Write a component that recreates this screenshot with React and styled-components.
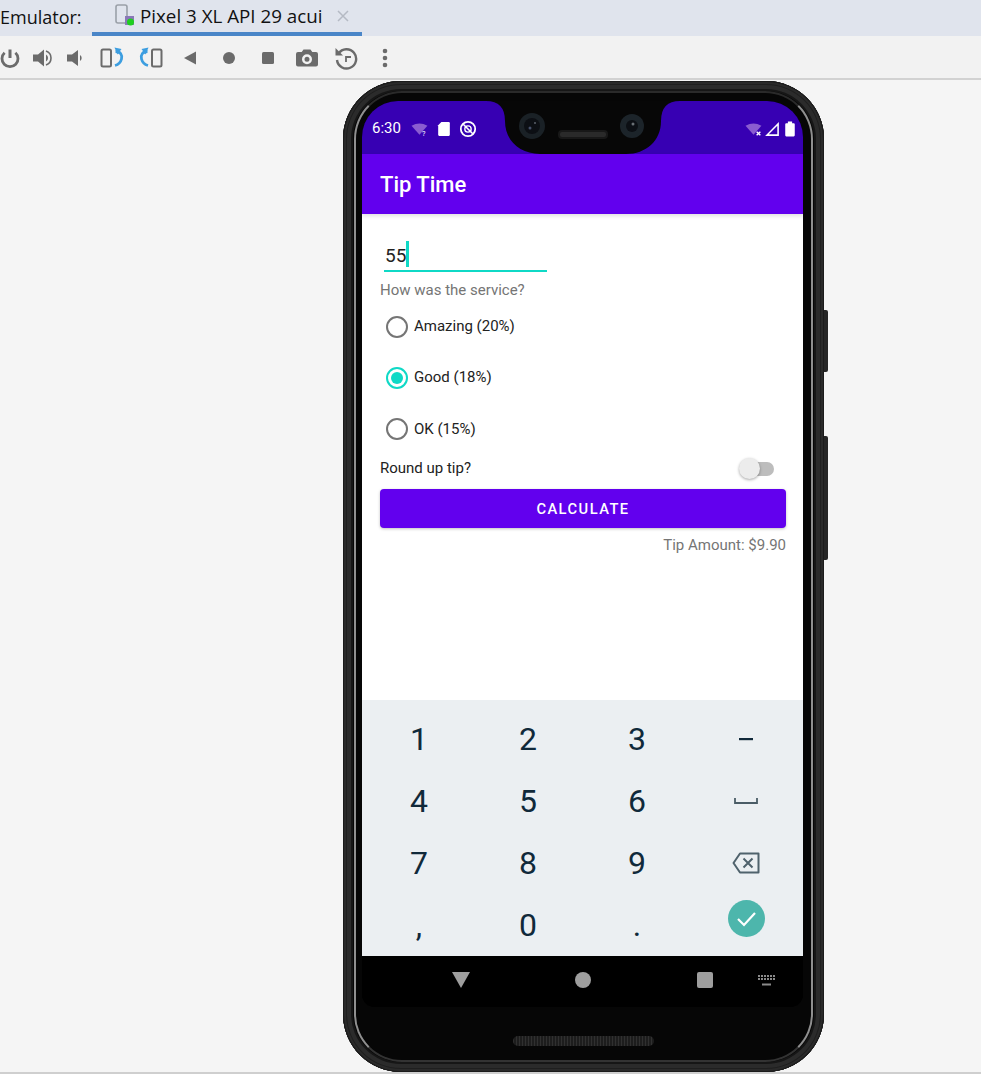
import React from "react";
import styled, { createGlobalStyle } from "styled-components";

const Global = createGlobalStyle`
  html, body { margin: 0; padding: 0; background: #f5f5f5; }
  body { width: 981px; height: 1074px; overflow: hidden; font-family: "Roboto", "Liberation Sans", sans-serif; }
`;

const Page = styled.div`
  width: 981px; height: 1074px; display: flex; flex-direction: column; overflow: hidden;
`;
const TabBar = styled.div`
  height: 36px; background: #e0e4ed; display: flex; align-items: stretch; flex: none;
`;
const TabLabel = styled.div`
  width: 92px; font: 400 18px/34px "Open Sans", "Noto Sans", sans-serif; color: #111; white-space: nowrap;
`;
const Tab = styled.div`
  width: 270px; box-sizing: border-box; border-bottom: 4px solid #4a86c8; display: flex; align-items: center;
  padding-left: 23px; gap: 3px; font: 400 18.8px/32px "Open Sans", "Noto Sans", sans-serif; color: #111;
  white-space: nowrap;
`;
const CloseMark = styled.svg`
  width: 12px; height: 12px; margin-left: 11px; flex: none;
`;
const Toolbar = styled.div`
  height: 42px; flex: none; box-sizing: border-box; padding-top: 2px; background: #f2f2f2; border-bottom: 0;
  display: grid; align-items: center; justify-items: center;
  grid-template-columns: 27.5px 31px 33px 40px 39px 39px 39px 39px 39px 39px 39px;
`;
const ToolIcon = styled.svg`
  display: block; width: 24px; height: 24px; color: #6b6b6b;
  &:first-child { justify-self: start; margin-left: -2px; }
`;
const Stage = styled.div`
  flex: 1; min-height: 0; box-sizing: border-box; padding: 1px 0 0 343px; border-top: 2px solid #d2d2d2; border-bottom: 2px solid #cfcfcf; background: #f5f5f5;
`;
const Frame = styled.div`
  position: relative; box-sizing: border-box; width: 481px; height: 991px;
  padding: 20px 21px 65px 19px; border-radius: 58px; background: #060606;
  box-shadow: inset 0 0 0 1px #1b1b1b, inset 0 0 0 3px #2a2a2a, inset 0 0 0 4px #1f1f1f, inset 0 0 0 8px #2b2b2b, inset 0 0 0 10px #161616;
  &::before {
    content: ""; position: absolute; inset: 10px 11px; border-radius: 48px; box-sizing: border-box;
    border: 2.5px solid; border-color: #2a2a2a #8f8f8f #333 #8f8f8f;
  }
`;
const SideButton = styled.div`
  position: absolute; left: 100%; top: ${p => p.$top}px; width: 4px; height: ${p => p.$h}px;
  background: #262626; border-radius: 0 2px 2px 0;
`;
const Screen = styled.div`
  position: relative; height: 100%; display: flex; flex-direction: column; overflow: hidden;
  border-radius: 36px 36px 13px 13px; background: #000;
`;
const StatusBar = styled.div`
  height: 53px; flex: none; background: #3700b3; display: flex; align-items: center; justify-content: space-between;
  padding: 2px 4px 0 10px; box-sizing: border-box; color: #fff;
`;
const StatusGroup = styled.div`
  display: flex; align-items: center; gap: ${p => p.$gap}px;
`;
const Clock = styled.span`
  font: 400 15px/1 "Roboto", sans-serif; margin-right: 4px;
`;
const StatusIcon = styled.svg`
  display: block; width: 18px; height: 18px;
`;
const NotchShape = styled.svg`
  position: absolute; left: 118px; top: 0; width: 206px; height: 53px; display: block;
`;
const AppBar = styled.div`
  height: 60px; flex: none; background: #6200ee; color: #fff; display: flex; align-items: center; padding: 2px 0 0 18px; box-sizing: border-box;
  font: 500 22px/1 "Roboto", sans-serif; position: relative;
  box-shadow: 0 2px 4px rgba(0,0,0,.12);
`;
const Content = styled.div`
  height: 486px; flex: none; background: #fff; box-sizing: border-box; padding: 0 17px 0 18px;
  display: flex; flex-direction: column;
`;
const Field = styled.div`
  margin: 26px 0 0 4px; width: 163px; height: 32px; box-sizing: border-box; border-bottom: 2px solid #0fd9c6;
  display: flex; align-items: center; font: 400 19px/1 "Roboto", sans-serif; color: #222; padding-left: 1px;
`;
const Caret = styled.span`
  display: inline-block; width: 2.5px; height: 26px; background: #0fd9c6; margin-top: -3px;
`;
const Hint = styled.div`
  margin-top: 9px; font: 400 15px/18px "Roboto", sans-serif; color: #757575;
`;
const RadioGroup = styled.div`
  display: flex; flex-direction: column; margin-top: 2px;
`;
const RadioRow = styled.div`
  height: 51.3px; display: flex; align-items: center; padding-left: 6px; gap: 6px;
  font: 400 15px/1 "Roboto", sans-serif; color: #222;
`;
const RadioDot = styled.span`
  width: 22px; height: 22px; box-sizing: border-box; border-radius: 50%; flex: none;
  border: 2px solid ${p => p.$on ? "#0fd9c6" : "#757575"};
  display: flex; align-items: center; justify-content: center;
  &::after { content: ""; width: 12px; height: 12px; border-radius: 50%; background: ${p => p.$on ? "#0fd9c6" : "transparent"}; }
`;
const SwitchRow = styled.div`
  display: flex; align-items: center; justify-content: space-between; height: 30px; margin-top: -1px;
  font: 400 15px/1 "Roboto", sans-serif; color: #222;
`;
const SwitchTrack = styled.span`
  position: relative; width: 30px; height: 14px; border-radius: 7px; background: #bdbdbd; margin-right: 12px; display: block;
`;
const SwitchThumb = styled.span`
  position: absolute; left: -5px; top: -4px; width: 21px; height: 21px; border-radius: 50%; background: #ececec;
  box-shadow: 0 1px 3px rgba(0,0,0,.35);
`;
const CalcButton = styled.div`
  margin-top: 5px; height: 39px; box-sizing: border-box; padding-top: 2px; border-radius: 4px; background: #6200ee; color: #fff; display: flex; align-items: center; justify-content: center;
  font: 500 14.7px/1 "Roboto", sans-serif; letter-spacing: 1.45px; box-shadow: 0 1px 3px rgba(0,0,0,.25);
`;
const TipAmount = styled.div`
  margin-top: 8px; text-align: right; font: 400 15px/18px "Roboto", sans-serif; color: #757575;
`;
const Keyboard = styled.div`
  height: 256px; flex: none; background: #ebeff2; box-sizing: border-box; padding: 8px 2px 0 2.5px;
  display: grid; grid-template-columns: repeat(4, 109px); grid-auto-rows: 62px;
`;
const Key = styled.div`
  display: flex; align-items: center; justify-content: center; font: 400 32px/1 "Roboto", sans-serif; color: #10293a;
`;
const DoneKey = styled(Key)`
  padding-bottom: 14px;
`;
const KeySvg = styled.svg`
  display: block;
`;
const NavBar = styled.div`
  flex: 1; background: #000; display: grid; grid-template-columns: repeat(3, 122px) 1fr; align-items: center; justify-items: center;
  padding: 0 0 3px 38px; box-sizing: border-box;
`;
const NavIcon = styled.svg`
  display: block;
`;
const NavKeys = styled.svg`
  display: block; justify-self: start; margin: 0 0 0 -8px;
`;
const BottomSpeaker = styled.div`
  position: absolute; left: 170px; bottom: 26px; width: 141px; height: 10px; border-radius: 5px; background:
    repeating-linear-gradient(90deg, #303030 0 1px, #1d1d1d 1px 3px);
`;

const Icons = {
  power: (
    <>
      <path d="M12 3.500v8.500" stroke="currentColor" strokeWidth="3" fill="none" />
      <path d="M6.600 6.800a8 8 0 1 0 10.800 0" stroke="currentColor" strokeWidth="2.800" fill="none" />
    </>
  ),
  volUp: (
    <>
      <path d="M2 8.500h5L13 3.500v17l-6-5H2z" fill="currentColor" />
      <path d="M15 8.500a4 4 0 0 1 0 7z" fill="currentColor" />
      <path d="M15 5a7.400 7.400 0 0 1 0 14" stroke="currentColor" strokeWidth="1.600" fill="none" />
    </>
  ),
  volDown: <path d="M4 8.500h5L15 4v16l-6-4.500H4zM17 9a3.500 3.500 0 0 1 0 6z" fill="currentColor" />,
  rotR: (
    <>
      <rect x="1.500" y="3.500" width="9.500" height="17" rx="1.500" stroke="currentColor" strokeWidth="2" fill="none" />
      <path d="M15.500 5.500c5 0 7 3.500 6 7.500-.8 3.200-3 5.500-6.500 6.500" stroke="#3d9ee0" strokeWidth="2.800" fill="none" />
      <path d="M14.500 1.500l7 1.500-4 5.500z" fill="#3d9ee0" />
    </>
  ),
  rotL: (
    <>
      <rect x="13" y="3.500" width="9.500" height="17" rx="1.500" stroke="currentColor" strokeWidth="2" fill="none" />
      <path d="M8.500 5.500c-5 0-7 3.500-6 7.500.8 3.200 3 5.500 6.500 6.500" stroke="#3d9ee0" strokeWidth="2.800" fill="none" />
      <path d="M9.500 1.500l-7 1.500 4 5.500z" fill="#3d9ee0" />
    </>
  ),
  back: <path d="M6 12l12-6.500v13z" fill="currentColor" />,
  home: <circle cx="12" cy="12" r="6" fill="currentColor" />,
  stop: <rect x="6" y="6" width="12" height="12" rx="1.500" fill="currentColor" />,
  camera: (
    <path fillRule="evenodd" d="M8.500 3.500h7l1.800 2.500h3.700a2 2 0 0 1 2 2v10.500a2 2 0 0 1-2 2H3a2 2 0 0 1-2-2V8a2 2 0 0 1 2-2h3.700zM12 8.300a5 5 0 1 0 0 10 5 5 0 0 0 0-10zm0 2.500a2.500 2.500 0 1 1 0 5 2.500 2.500 0 0 1 0-5z" fill="currentColor" />
  ),
  history: (
    <>
      <path d="M4.600 7.500A9.600 9.600 0 1 1 3 14" stroke="currentColor" strokeWidth="2.400" fill="none" />
      <path d="M1.500 2v7.500H9z" fill="currentColor" />
      <path d="M17 11h-5v5" stroke="currentColor" strokeWidth="1.800" fill="none" />
    </>
  ),
  more: (
    <>
      <circle cx="12" cy="5" r="2.300" fill="currentColor" />
      <circle cx="12" cy="12" r="2.300" fill="currentColor" />
      <circle cx="12" cy="19" r="2.300" fill="currentColor" />
    </>
  ),
};

const toolOrder = ["power", "volUp", "volDown", "rotR", "rotL", "back", "home", "stop", "camera", "history", "more"];

const DeviceIcon = () => (
  <svg width="22" height="24" viewBox="0 0 22 24" style={{ flex: "none" }}>
    <rect x="1" y="1" width="11" height="18" rx="2" fill="none" stroke="#9aa0a8" strokeWidth="1.600" />
    <rect x="10" y="12" width="9" height="9" fill="#8a78b8" />
    <circle cx="15.500" cy="18" r="3.500" fill="#1fd01f" />
  </svg>
);

const keys = ["1", "2", "3"];

export default function App() {
  return (
    <Page>
      <Global />
      <TabBar>
        <TabLabel>Emulator:</TabLabel>
        <Tab>
          <DeviceIcon />
          Pixel 3 XL API 29 acui
          <CloseMark viewBox="0 0 12 12">
            <path d="M1 1l10 10M11 1L1 11" stroke="#b5bac4" strokeWidth="1.500" />
          </CloseMark>
        </Tab>
      </TabBar>
      <Toolbar>
        {toolOrder.map(name => (
          <ToolIcon key={name} viewBox="0 0 24 24">{Icons[name]}</ToolIcon>
        ))}
      </Toolbar>
      <Stage>
        <Frame>
          <SideButton $top={229} $h={62} />
          <SideButton $top={355} $h={124} />
          <Screen>
            <StatusBar>
              <StatusGroup $gap={6}>
                <Clock>6:30</Clock>
                <StatusIcon viewBox="0 0 17 17">
                  <path d="M0.500 5.500Q8 1 15.500 5.500L8 14z" fill="#8a5cd0" />
                  <text x="10.500" y="15" fontSize="7" fill="#fff" fontFamily="Roboto">?</text>
                </StatusIcon>
                <StatusIcon viewBox="0 0 17 17">
                  <path d="M6 2h7a1 1 0 0 1 1 1v11a1 1 0 0 1-1 1H4a1 1 0 0 1-1-1V5z" fill="#fff" />
                </StatusIcon>
                <StatusIcon viewBox="0 0 17 17">
                  <circle cx="8.500" cy="8.500" r="6.800" stroke="#fff" strokeWidth="1.700" fill="none" />
                  <circle cx="8.500" cy="8.500" r="3" stroke="#fff" strokeWidth="1.300" fill="none" />
                  <path d="M4 4l9 9" stroke="#fff" strokeWidth="1.500" />
                </StatusIcon>
              </StatusGroup>
              <StatusGroup $gap={0}>
                <StatusIcon viewBox="0 0 17 17">
                  <path d="M0.500 5.500Q8 1 15.500 5.500L8 14z" fill="#8a5cd0" />
                  <path d="M11 11l3.500 3.500M14.500 11L11 14.500" stroke="#fff" strokeWidth="1.300" />
                </StatusIcon>
                <StatusIcon viewBox="0 0 17 17">
                  <path d="M15 2v13H2zM13.500 5.500L5.500 13.500h8z" fill="#fff" fillRule="evenodd" />
                </StatusIcon>
                <StatusIcon viewBox="0 0 17 17">
                  <path d="M6.500 1.500h4v1.500h1.500a1 1 0 0 1 1 1v10.500a1 1 0 0 1-1 1H5a1 1 0 0 1-1-1V4a1 1 0 0 1 1-1h1.500z" fill="#fff" />
                </StatusIcon>
              </StatusGroup>
            </StatusBar>
            <NotchShape viewBox="0 0 206 53">
              <path d="M6 0Q25 0 25 20C25 40 40 53 60 53H146C166 53 181 40 181 20Q181 0 200 0z" fill="#070707" />
              <circle cx="52" cy="25" r="13" fill="#1a2126" />
              <circle cx="52" cy="25" r="8" fill="#0c0f14" />
              <circle cx="50" cy="27" r="1.500" fill="#46506a" />
              <circle cx="55" cy="22" r="1" fill="#5a626a" />
              <rect x="78" y="29" width="50" height="9" rx="4" fill="#181818" />
              <rect x="80" y="31" width="46" height="5" rx="2" fill="#2a2a2a" />
              <circle cx="152" cy="25" r="12" fill="#1c242a" />
              <circle cx="152" cy="25" r="6" fill="#0c0f14" />
              <circle cx="153" cy="23" r="1.500" fill="#6a7075" />
            </NotchShape>
            <AppBar>Tip Time</AppBar>
            <Content>
              <Field>55<Caret /></Field>
              <Hint>How was the service?</Hint>
              <RadioGroup>
                <RadioRow><RadioDot />Amazing (20%)</RadioRow>
                <RadioRow><RadioDot $on />Good (18%)</RadioRow>
                <RadioRow><RadioDot />OK (15%)</RadioRow>
              </RadioGroup>
              <SwitchRow>
                Round up tip?
                <SwitchTrack><SwitchThumb /></SwitchTrack>
              </SwitchRow>
              <CalcButton>CALCULATE</CalcButton>
              <TipAmount>Tip Amount: $9.90</TipAmount>
            </Content>
            <Keyboard>
              {keys.map(k => <Key key={k}>{k}</Key>)}
              <Key>
                <KeySvg width="14" height="4" viewBox="0 0 14 4"><rect y="1" width="14" height="2.200" fill="#10293a" /></KeySvg>
              </Key>
              <Key>4</Key><Key>5</Key><Key>6</Key>
              <Key>
                <KeySvg width="24" height="8" viewBox="0 0 24 8"><path d="M1 1v5h22V1" fill="none" stroke="#4a5c66" strokeWidth="1.800" /></KeySvg>
              </Key>
              <Key>7</Key><Key>8</Key><Key>9</Key>
              <Key>
                <KeySvg width="28" height="22" viewBox="0 0 28 22">
                  <path d="M8 1.500h18.500v19H8L1.500 11z" fill="none" stroke="#4f626c" strokeWidth="2" strokeLinejoin="round" />
                  <path d="M11.500 6.500l9 9M20.500 6.500l-9 9" stroke="#4f626c" strokeWidth="2" />
                </KeySvg>
              </Key>
              <Key>,</Key><Key>0</Key><Key>.</Key>
              <DoneKey>
                <KeySvg width="37" height="37" viewBox="0 0 37 37">
                  <circle cx="18.500" cy="18.500" r="18.500" fill="#4db6ac" />
                  <path d="M10 19l6 6 11-12" fill="none" stroke="#fff" strokeWidth="2.200" />
                </KeySvg>
              </DoneKey>
            </Keyboard>
            <NavBar>
              <NavIcon width="18" height="16" viewBox="0 0 18 16"><path d="M0 0h18L9 16z" fill="#9e9e9e" /></NavIcon>
              <NavIcon width="16" height="16" viewBox="0 0 16 16"><circle cx="8" cy="8" r="8" fill="#9e9e9e" /></NavIcon>
              <NavIcon width="16" height="16" viewBox="0 0 16 16"><rect width="16" height="16" rx="2" fill="#9e9e9e" /></NavIcon>
              <NavKeys width="17" height="11" viewBox="0 0 17 11">
                <path d="M0 0h2v2H0zM3 0h2v2H3zM6 0h2v2H6zM9 0h2v2H9zM12 0h2v2h-2zM15 0h2v2h-2zM0 3h2v2H0zM3 3h2v2H3zM6 3h2v2H6zM9 3h2v2H9zM12 3h2v2h-2zM15 3h2v2h-2zM4 8.500h9v2H4z" fill="#8a8a8a" />
              </NavKeys>
            </NavBar>
          </Screen>
          <BottomSpeaker />
        </Frame>
      </Stage>
    </Page>
  );
}
